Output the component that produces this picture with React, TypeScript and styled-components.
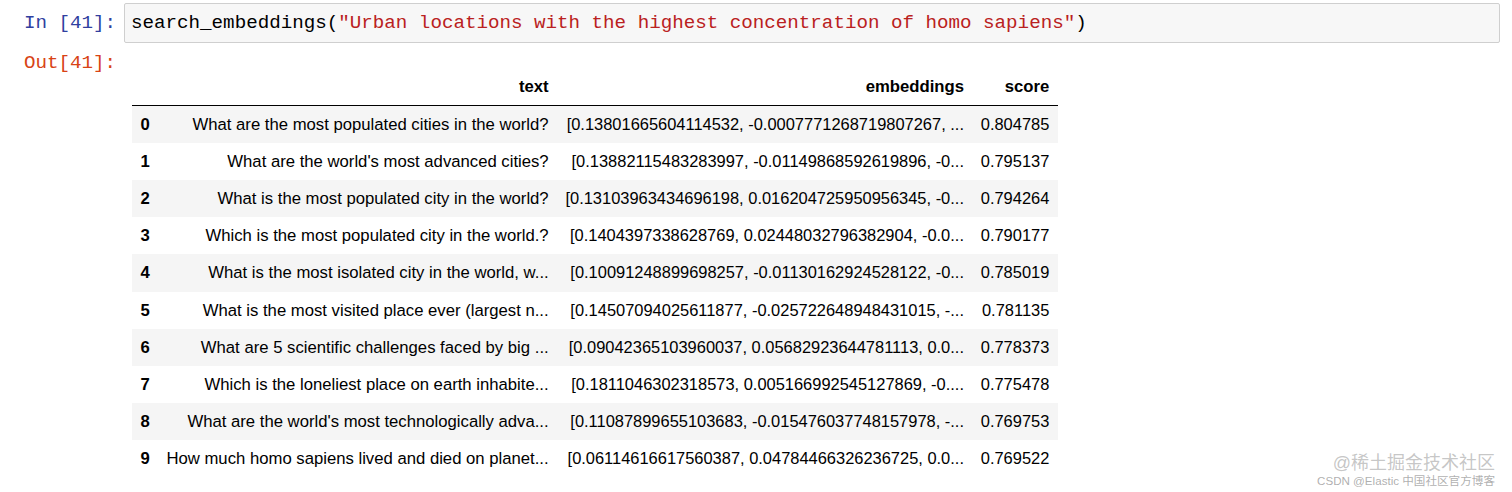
import React from "react";
import styled, { createGlobalStyle } from "styled-components";

const Global = createGlobalStyle`
  html, body { margin: 0; padding: 0; background: #ffffff; }
  body { font-family: "Liberation Sans", Arial, sans-serif; color: #000; }
`;

const Page = styled.div`
  position: relative;
  width: 1512px;
  height: 492px;
  overflow: hidden;
  background: #fff;
`;

const CellRow = styled.div<{ $top: number }>`
  display: flex;
  align-items: flex-start;
  margin-top: ${(p) => p.$top}px;
`;

const Prompt = styled.div<{ $kind: "in" | "out" }>`
  flex: 0 0 124px;
  box-sizing: border-box;
  padding-right: 8px;
  text-align: right;
  font-family: "Liberation Mono", "Courier New", monospace;
  font-size: 19.2px;
  line-height: 23px;
  color: ${(p) => (p.$kind === "in" ? "#303F9F" : "#D84315")};
  white-space: pre;
`;

const InPrompt = styled(Prompt)`
  padding-top: 8.5px;
`;

const InputBox = styled.div`
  width: 1376px;
  box-sizing: border-box;
  height: 40px;
  border: 1px solid #cfcfcf;
  border-radius: 2px;
  background: #f7f7f7;
  padding: 7.5px 6px;
  font-family: "Liberation Mono", "Courier New", monospace;
  font-size: 19.2px;
  line-height: 23px;
  color: #000;
  white-space: pre;
`;

const Str = styled.span`
  color: #ba2121;
`;

const OutArea = styled.div`
  padding-top: 16px;
  padding-left: 8px;
`;

const Table = styled.table`
  border-collapse: collapse;
  border-spacing: 0;
  font-family: "Liberation Sans", Arial, sans-serif;
  font-size: 16.7px;
  color: #000;
`;

const Head = styled.thead`
  border-bottom: 1px solid #000;
  vertical-align: bottom;
`;

const HeadCell = styled.th`
  text-align: right;
  font-weight: bold;
  padding: 8px 8.4px;
  line-height: 21.1px;
  white-space: nowrap;
`;

const BodyRow = styled.tr<{ $striped: boolean }>`
  background: ${(p) => (p.$striped ? "#f5f5f5" : "transparent")};
`;

const IndexCell = styled.th`
  text-align: left;
  font-weight: bold;
  padding: 8px 8.4px;
  line-height: 21.1px;
  vertical-align: middle;
`;

const Cell = styled.td<{ $num?: boolean }>`
  text-align: right;
  padding: 8px 8.4px;
  line-height: 21.1px;
  font-size: ${(p) => (p.$num ? "16.45px" : "16.7px")};
  white-space: nowrap;
  vertical-align: middle;
`;

const Watermark = styled.div`
  position: absolute;
  right: 17px;
  bottom: 4px;
  display: flex;
  flex-direction: column;
  align-items: flex-end;
  font-family: "Liberation Sans", "Noto Sans CJK SC", sans-serif;
  pointer-events: none;
`;

const WmBig = styled.div`
  font-size: 18px;
  line-height: 20px;
  color: rgba(150, 150, 150, 0.55);
`;

const WmSmall = styled.div`
  font-size: 11.6px;
  line-height: 15px;
  color: rgba(140, 140, 140, 0.7);
`;

const rows: [string, string, string][] = [
  ["What are the most populated cities in the world?", "[0.13801665604114532, -0.0007771268719807267, ...", "0.804785"],
  ["What are the world's most advanced cities?", "[0.13882115483283997, -0.01149868592619896, -0...", "0.795137"],
  ["What is the most populated city in the world?", "[0.13103963434696198, 0.016204725950956345, -0...", "0.794264"],
  ["Which is the most populated city in the world.?", "[0.1404397338628769, 0.02448032796382904, -0.0...", "0.790177"],
  ["What is the most isolated city in the world, w...", "[0.10091248899698257, -0.01130162924528122, -0...", "0.785019"],
  ["What is the most visited place ever (largest n...", "[0.14507094025611877, -0.025722648948431015, -...", "0.781135"],
  ["What are 5 scientific challenges faced by big ...", "[0.09042365103960037, 0.05682923644781113, 0.0...", "0.778373"],
  ["Which is the loneliest place on earth inhabite...", "[0.1811046302318573, 0.005166992545127869, -0....", "0.775478"],
  ["What are the world's most technologically adva...", "[0.11087899655103683, -0.015476037748157978, -...", "0.769753"],
  ["How much homo sapiens lived and died on planet...", "[0.06114616617560387, 0.04784466326236725, 0.0...", "0.769522"],
];

export default function App() {
  return (
    <Page>
      <Global />
      <CellRow $top={3}>
        <InPrompt $kind="in">In [41]:</InPrompt>
        <InputBox>
          search_embeddings(<Str>"Urban locations with the highest concentration of homo sapiens"</Str>)
        </InputBox>
      </CellRow>
      <CellRow $top={9}>
        <Prompt $kind="out">Out[41]:</Prompt>
        <OutArea>
          <Table>
            <Head>
              <tr>
                <HeadCell />
                <HeadCell>text</HeadCell>
                <HeadCell>embeddings</HeadCell>
                <HeadCell>score</HeadCell>
              </tr>
            </Head>
            <tbody>
              {rows.map((r, i) => (
                <BodyRow key={i} $striped={i % 2 === 0}>
                  <IndexCell>{i}</IndexCell>
                  <Cell>{r[0]}</Cell>
                  <Cell $num>{r[1]}</Cell>
                  <Cell $num>{r[2]}</Cell>
                </BodyRow>
              ))}
            </tbody>
          </Table>
        </OutArea>
      </CellRow>
      <Watermark>
        <WmBig>@稀土掘金技术社区</WmBig>
        <WmSmall>CSDN @Elastic 中国社区官方博客</WmSmall>
      </Watermark>
    </Page>
  );
}
